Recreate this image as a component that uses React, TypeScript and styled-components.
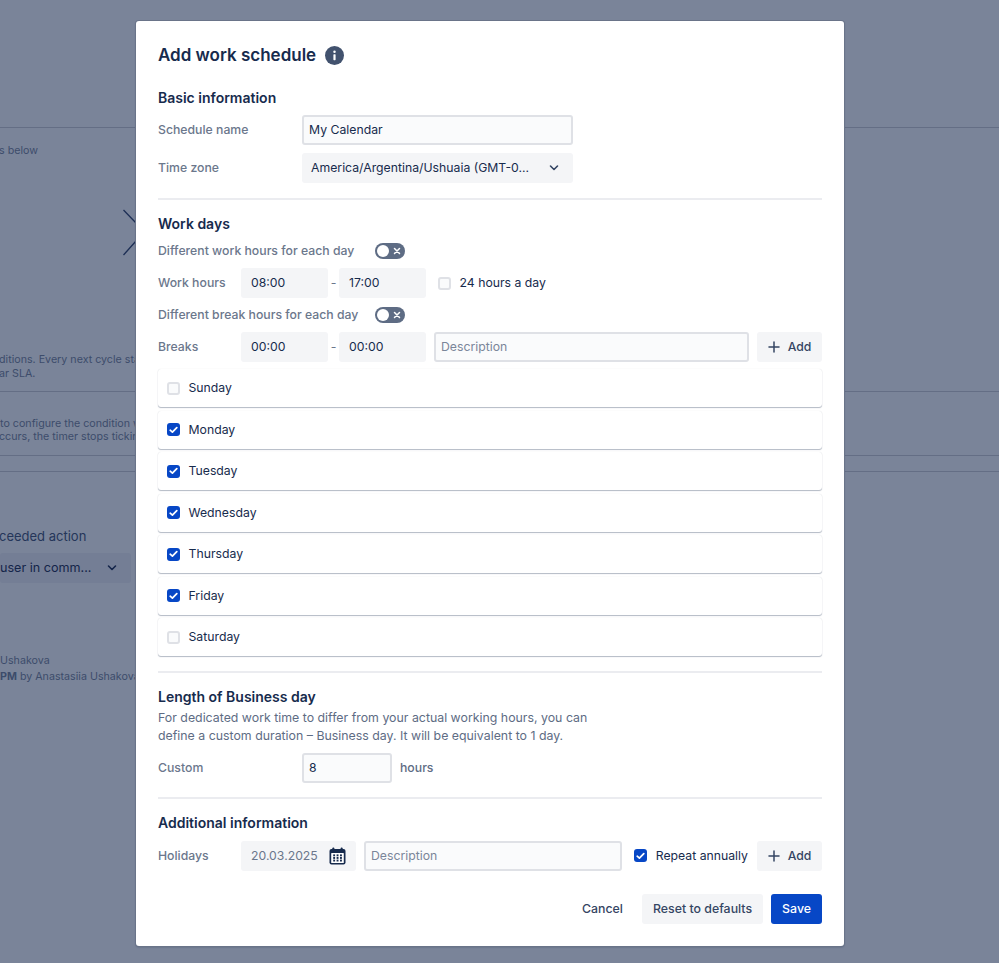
import React from "react";
import styled, { createGlobalStyle } from "styled-components";

const Global = createGlobalStyle`
  html, body { margin: 0; padding: 0; height: 100%; background: #7a8499; }
  body { font-family: Inter, "Liberation Sans", sans-serif; color: #172b4d; overflow: hidden; }
  * { box-sizing: border-box; }
`;

const Screen = styled.div`
  position: relative;
  width: 999px;
  height: 963px;
  overflow: hidden;
  background: #7a8499;
`;

const Behind = styled.div`
  position: absolute;
  inset: 0;
  color: #3d4c6b;
  font-size: 10.7px;
  line-height: 14px;
  white-space: nowrap;
`;
const Rule = styled.div<{ $top: number }>`
  position: absolute;
  top: ${(p) => p.$top}px;
  left: 0;
  right: 0;
  height: 1px;
  background: #646e85;
`;
const Scrap = styled.div<{ $top: number; $left: number; $size?: number; $color?: string }>`
  position: absolute;
  top: ${(p) => p.$top}px;
  left: ${(p) => p.$left}px;
  font-size: ${(p) => p.$size ?? 10.7}px;
  color: ${(p) => p.$color ?? "#3d4c6b"};
`;
const ScrapSelect = styled.div`
  position: absolute;
  top: 553px;
  left: 0;
  width: 131px;
  height: 30px;
  border-radius: 3px;
  background: #747e95;
  color: #14254a;
  font-size: 12.6px;
  display: flex;
  align-items: center;
  padding-right: 14px;
  justify-content: space-between;
`;
const Cross = styled.svg`
  position: absolute;
  left: 120px;
  top: 205px;
`;

const Modal = styled.div`
  position: relative;
  margin: 21px 0 0 136px;
  width: 708px;
  height: 925px;
  background: #fff;
  border-radius: 3px;
  box-shadow: 0 0 0 1px #6a7489, 0 1px 2px rgba(9, 30, 66, 0.4);
  padding: 20px 22px 0 22px;
  display: flex;
  flex-direction: column;
  font-size: 12.25px;
  line-height: 20px;
`;

const TitleRow = styled.div`
  display: flex;
  align-items: center;
  gap: 9px;
  height: 28px;
`;
const Title = styled.h1`
  margin: 0;
  font-size: 17px;
  font-weight: 600;
  line-height: 28px;
  color: #172b4d;
`;
const SectionTitle = styled.h2<{ $top: number }>`
  margin: ${(p) => p.$top}px 0 0;
  font-size: 14px;
  font-weight: 600;
  line-height: 20px;
  color: #172b4d;
`;
const Row = styled.div<{ $top: number }>`
  display: flex;
  align-items: center;
  margin-top: ${(p) => p.$top}px;
  flex: none;
`;
const Label = styled.div<{ $w: number }>`
  width: ${(p) => p.$w}px;
  flex: none;
  color: #6b778c;
  font-size: 12.25px;
  font-weight: 500;
`;
const ToggleLabel = styled.div`
  color: #6b778c;
  font-size: 12.25px;
  font-weight: 500;
  width: 217px;
`;
const TextBox = styled.div<{ $w?: number; $muted?: boolean }>`
  width: ${(p) => (p.$w ? p.$w + "px" : "auto")};
  flex: ${(p) => (p.$w ? "none" : "1")};
  height: 30px;
  background: #fafbfc;
  border: 2px solid #dfe1e6;
  border-radius: 3px;
  padding: 0 5px;
  display: flex;
  align-items: center;
  font-size: 12.25px;
  color: ${(p) => (p.$muted ? "#7a869a" : "#172b4d")};
`;
const Select = styled.div<{ $w: number; $pl?: number; $pr?: number; $muted?: boolean }>`
  width: ${(p) => p.$w}px;
  flex: none;
  height: 30px;
  background: #f4f5f7;
  border-radius: 3px;
  padding: 0 ${(p) => p.$pr ?? 10}px 0 ${(p) => p.$pl ?? 10}px;
  display: flex;
  align-items: center;
  justify-content: space-between;
  font-size: 12.25px;
  color: ${(p) => (p.$muted ? "#5e6c84" : "#172b4d")};
`;
const Dash = styled.div`
  width: 11px;
  text-align: center;
  color: #6b778c;
  flex: none;
`;
const Divider = styled.div<{ $top: number }>`
  height: 2px;
  background: #ebecf0;
  margin-top: ${(p) => p.$top}px;
  flex: none;
`;
const ToggleTrack = styled.div`
  width: 30px;
  height: 16px;
  border-radius: 8px;
  background: #5e6c84;
  position: relative;
  flex: none;
  display: flex;
  align-items: center;
  justify-content: flex-end;
  padding-right: 4px;
`;
const ToggleKnob = styled.div`
  position: absolute;
  left: 2px;
  top: 2px;
  width: 12px;
  height: 12px;
  border-radius: 50%;
  background: #fff;
`;
const Check = styled.div<{ $on?: boolean; $ml?: number }>`
  width: 13px;
  height: 13px;
  flex: none;
  margin-left: ${(p) => p.$ml ?? 0}px;
  border-radius: 3px;
  background: ${(p) => (p.$on ? "#0747c6" : "#fafbfc")};
  border: ${(p) => (p.$on ? "none" : "2px solid #dfe1e6")};
  display: flex;
  align-items: center;
  justify-content: center;
`;
const CheckLabel = styled.div`
  color: #172b4d;
  font-size: 12.25px;
  margin-left: 8.5px;
  white-space: nowrap;
`;
const AddButton = styled.div<{ $ml?: number }>`
  width: 65px;
  height: 30px;
  flex: none;
  margin-left: ${(p) => p.$ml ?? 0}px;
  background: #f4f5f7;
  border-radius: 3px;
  display: flex;
  align-items: center;
  justify-content: center;
  gap: 8px;
  font-size: 12.25px;
  font-weight: 500;
  color: #344563;
`;
const DayList = styled.div`
  display: flex;
  flex-direction: column;
  gap: 3.5px;
  margin-top: 7px;
`;
const DayCard = styled.div`
  height: 38px;
  display: flex;
  align-items: center;
  padding-left: 9px;
  background: #fff;
  border-radius: 3px;
  box-shadow: 0 1px 1px rgba(9, 30, 66, 0.3), 0 0 1px rgba(9, 30, 66, 0.14);
  flex: none;
`;
const Description = styled.p`
  margin: 1.5px 0 0;
  width: 460px;
  font-size: 12.35px;
  line-height: 18px;
  color: #5e6c84;
`;
const Hint = styled.div`
  color: #5e6c84;
  font-size: 12.25px;
  font-weight: 500;
  margin-left: 8px;
`;
const DescriptionBox = styled(TextBox)<{ $mr: number }>`
  margin: 0 ${(p) => p.$mr}px 0 8px;
`;
const Footer = styled.div`
  margin-top: 23px;
  display: flex;
  justify-content: flex-end;
  align-items: center;
  gap: 8px;
`;
const FootButton = styled.div<{ $kind: "link" | "plain" | "primary" }>`
  height: 30px;
  padding: 0 11px;
  display: flex;
  align-items: center;
  border-radius: 3px;
  font-size: 12.35px;
  font-weight: 500;
  color: ${(p) => (p.$kind === "primary" ? "#fff" : "#344563")};
  background: ${(p) =>
    p.$kind === "primary" ? "#0747c6" : p.$kind === "plain" ? "#f4f5f7" : "transparent"};
`;
const DateText = styled.span`
  color: #6b778c;
`;

const Chevron = ({ color = "#344563" }: { color?: string }) => (
  <svg width="10" height="8" viewBox="0 0 10 8" fill="none">
    <path d="M1.5 2 L5 5.5 L8.5 2" stroke={color} strokeWidth="1.6" strokeLinecap="round" strokeLinejoin="round" />
  </svg>
);
const InfoIcon = () => (
  <svg width="19" height="19" viewBox="0 0 19 19">
    <circle cx="9.5" cy="9.5" r="9.5" fill="#42526e" />
    <rect x="8.4" y="8.2" width="2.2" height="6" rx="0.6" fill="#fff" />
    <circle cx="9.5" cy="5.7" r="1.25" fill="#fff" />
  </svg>
);
const Tick = () => (
  <svg width="9" height="8" viewBox="0 0 9 8" fill="none">
    <path d="M1.2 4.2 L3.4 6.2 L7.8 1.6" stroke="#fff" strokeWidth="1.7" strokeLinecap="round" strokeLinejoin="round" />
  </svg>
);
const Toggle = () => (
  <ToggleTrack>
    <ToggleKnob />
    <svg width="8" height="8" viewBox="0 0 8 8" fill="none">
      <path d="M1.5 1.5 L6.5 6.5 M6.5 1.5 L1.5 6.5" stroke="#fff" strokeWidth="1.5" strokeLinecap="round" />
    </svg>
  </ToggleTrack>
);
const Plus = () => (
  <svg width="12" height="12" viewBox="0 0 12 12" fill="none">
    <path d="M6 1 V11 M1 6 H11" stroke="#344563" strokeWidth="1.5" strokeLinecap="round" />
  </svg>
);
const CalendarIcon = () => (
  <svg width="17" height="18" viewBox="0 0 17 18">
    <rect x="3.4" y="0.5" width="1.9" height="4" rx="0.8" fill="#172b4d" />
    <rect x="11.7" y="0.5" width="1.9" height="4" rx="0.8" fill="#172b4d" />
    <rect x="0.5" y="2" width="16" height="15.5" rx="2" fill="#172b4d" />
    <rect x="2.2" y="6" width="12.6" height="10" rx="0.6" fill="#fff" />
    {[4.2, 7.6, 11].map((x) =>
      [7.4, 10, 12.6].map((y) => <rect key={`${x}-${y}`} x={x} y={y} width="1.9" height="1.9" fill="#172b4d" />)
    )}
  </svg>
);

const days: [string, boolean][] = [
  ["Sunday", false],
  ["Monday", true],
  ["Tuesday", true],
  ["Wednesday", true],
  ["Thursday", true],
  ["Friday", true],
  ["Saturday", false],
];

export default function App() {
  return (
    <Screen>
      <Global />
      <Behind>
        <Rule $top={127} />
        <Rule $top={391} />
        <Rule $top={455} />
        <Rule $top={471} />
        <Scrap $top={144} $left={-1}>s below</Scrap>
        <Cross width="20" height="56" viewBox="0 0 20 56" fill="none">
          <path d="M3.5 5 L16 18 M16 36 L3.5 50" stroke="#1d2f55" strokeWidth="1.3" />
        </Cross>
        <Scrap $top={353} $left={-1}>ditions. Every next cycle sta</Scrap>
        <Scrap $top={367} $left={-1}>ar SLA.</Scrap>
        <Scrap $top={417} $left={0}>to configure the condition w</Scrap>
        <Scrap $top={430} $left={-1}>ccurs, the timer stops tickin</Scrap>
        <Scrap $top={529} $left={-1} $size={13} $color="#25365a">ceeded action</Scrap>
        <ScrapSelect>
          <span>user in comm...</span>
          <Chevron color="#14254a" />
        </ScrapSelect>
        <Scrap $top={654} $left={0}>Ushakova</Scrap>
        <Scrap $top={670} $left={0}><b>PM</b> by Anastasiia Ushakova</Scrap>
      </Behind>
      <Modal>
        <TitleRow>
          <Title>Add work schedule</Title>
          <InfoIcon />
        </TitleRow>
        <SectionTitle $top={19}>Basic information</SectionTitle>
        <Row $top={7}>
          <Label $w={144}>Schedule name</Label>
          <TextBox $w={271}>My Calendar</TextBox>
        </Row>
        <Row $top={8}>
          <Label $w={144}>Time zone</Label>
          <Select $w={271} $pl={9} $pr={14}>
            <span>America/Argentina/Ushuaia (GMT-0...</span>
            <Chevron />
          </Select>
        </Row>
        <Divider $top={15} />
        <SectionTitle $top={14}>Work days</SectionTitle>
        <Row $top={7}>
          <ToggleLabel>Different work hours for each day</ToggleLabel>
          <Toggle />
        </Row>
        <Row $top={7}>
          <Label $w={83}>Work hours</Label>
          <Select $w={87}>08:00</Select>
          <Dash>-</Dash>
          <Select $w={87}>17:00</Select>
          <Check $ml={12} />
          <CheckLabel>24 hours a day</CheckLabel>
        </Row>
        <Row $top={7}>
          <ToggleLabel>Different break hours for each day</ToggleLabel>
          <Toggle />
        </Row>
        <Row $top={7}>
          <Label $w={83}>Breaks</Label>
          <Select $w={87}>00:00</Select>
          <Dash>-</Dash>
          <Select $w={87}>00:00</Select>
          <DescriptionBox $muted $mr={8}>Description</DescriptionBox>
          <AddButton><Plus />Add</AddButton>
        </Row>
        <DayList>
          {days.map(([name, on]) => (
            <DayCard key={name}>
              <Check $on={on}>{on && <Tick />}</Check>
              <CheckLabel>{name}</CheckLabel>
            </DayCard>
          ))}
        </DayList>
        <Divider $top={15} />
        <SectionTitle $top={14}>Length of Business day</SectionTitle>
        <Description>
          For dedicated work time to differ from your actual working hours, you can define a custom duration – Business day. It will be equivalent to 1 day.
        </Description>
        <Row $top={8}>
          <Label $w={144}>Custom</Label>
          <TextBox $w={90}>8</TextBox>
          <Hint>hours</Hint>
        </Row>
        <Divider $top={14} />
        <SectionTitle $top={14}>Additional information</SectionTitle>
        <Row $top={8}>
          <Label $w={83}>Holidays</Label>
          <Select $w={115} $pr={10}>
            <DateText>20.03.2025</DateText>
            <CalendarIcon />
          </Select>
          <DescriptionBox $muted $mr={12}>Description</DescriptionBox>
          <Check $on><Tick /></Check>
          <CheckLabel>Repeat annually</CheckLabel>
          <AddButton $ml={9}><Plus />Add</AddButton>
        </Row>
        <Footer>
          <FootButton $kind="link">Cancel</FootButton>
          <FootButton $kind="plain">Reset to defaults</FootButton>
          <FootButton $kind="primary">Save</FootButton>
        </Footer>
      </Modal>
    </Screen>
  );
}
